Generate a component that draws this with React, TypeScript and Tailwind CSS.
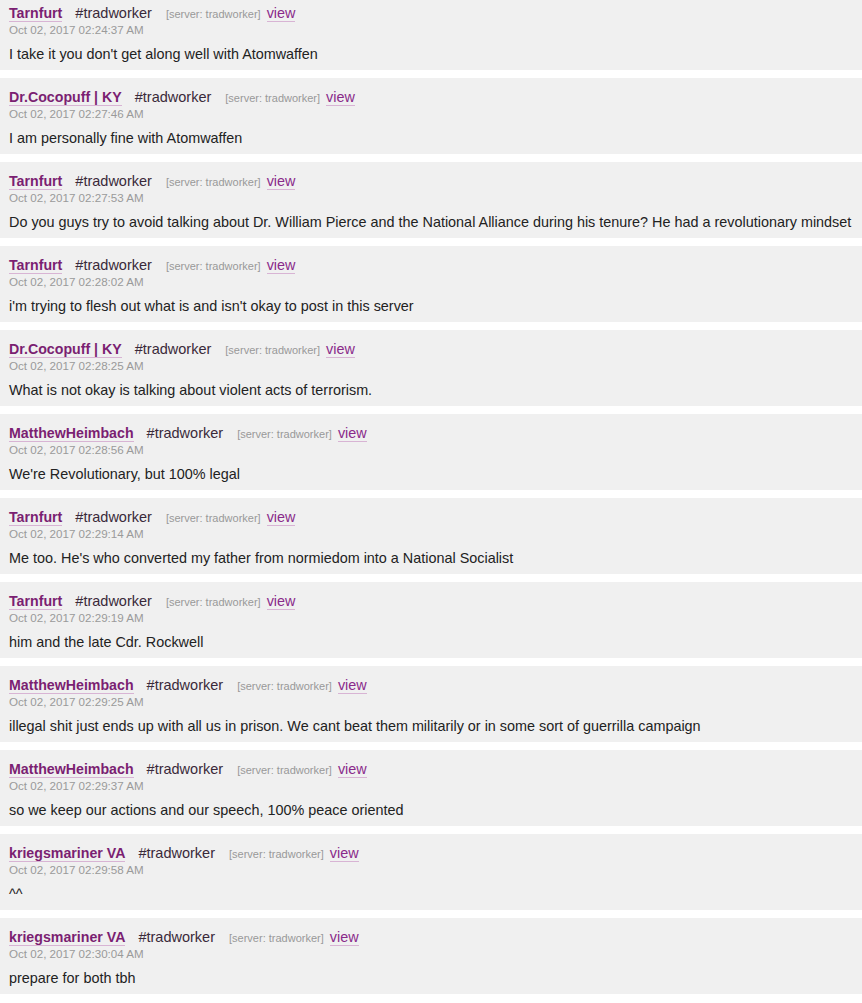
const MESSAGES = [
  { user: "Tarnfurt", time: "Oct 02, 2017 02:24:37 AM", text: "I take it you don't get along well with Atomwaffen" },
  { user: "Dr.Cocopuff | KY", time: "Oct 02, 2017 02:27:46 AM", text: "I am personally fine with Atomwaffen" },
  { user: "Tarnfurt", time: "Oct 02, 2017 02:27:53 AM", text: "Do you guys try to avoid talking about Dr. William Pierce and the National Alliance during his tenure? He had a revolutionary mindset" },
  { user: "Tarnfurt", time: "Oct 02, 2017 02:28:02 AM", text: "i'm trying to flesh out what is and isn't okay to post in this server" },
  { user: "Dr.Cocopuff | KY", time: "Oct 02, 2017 02:28:25 AM", text: "What is not okay is talking about violent acts of terrorism." },
  { user: "MatthewHeimbach", time: "Oct 02, 2017 02:28:56 AM", text: "We're Revolutionary, but 100% legal" },
  { user: "Tarnfurt", time: "Oct 02, 2017 02:29:14 AM", text: "Me too. He's who converted my father from normiedom into a National Socialist" },
  { user: "Tarnfurt", time: "Oct 02, 2017 02:29:19 AM", text: "him and the late Cdr. Rockwell" },
  { user: "MatthewHeimbach", time: "Oct 02, 2017 02:29:25 AM", text: "illegal shit just ends up with all us in prison. We cant beat them militarily or in some sort of guerrilla campaign" },
  { user: "MatthewHeimbach", time: "Oct 02, 2017 02:29:37 AM", text: "so we keep our actions and our speech, 100% peace oriented" },
  { user: "kriegsmariner VA", time: "Oct 02, 2017 02:29:58 AM", text: "^^" },
  { user: "kriegsmariner VA", time: "Oct 02, 2017 02:30:04 AM", text: "prepare for both tbh" },
];

function Message({ user, time, text }: { user: string; time: string; text: string }) {
  return (
    <div className="bg-[#f0f0f0] pl-[9px] pt-[11px] pb-[8px]">
      <div className="flex items-baseline h-[16px] leading-[16px] whitespace-nowrap">
        <a className="text-[14.2px] font-bold text-[#7b1f72] border-b border-[#d8b4d4]">{user}</a>
        <span className="ml-[13px] text-[14.5px] text-[#3a2a3a]">#tradworker</span>
        <span className="ml-[14px] text-[11px] text-[#999999]">[server: tradworker]</span>
        <a className="ml-[6px] text-[14.4px] text-[#8a2a8a] border-b border-[#d8b4d4]">view</a>
      </div>
      <div className="h-[16px] leading-[17px] text-[11.6px] text-[#9a9a9a]">{time}</div>
      <div className="mt-[9px] h-[16px] leading-[16px] text-[14.4px] text-[#222222] whitespace-nowrap">{text}</div>
    </div>
  );
}

export default function App() {
  return (
    <div
      className="w-[862px] h-[1003px] overflow-hidden bg-white"
      style={{ fontFamily: '"Liberation Sans", Arial, sans-serif' }}
    >
      <div className="-mt-[6px] flex flex-col gap-[8px]">
        {MESSAGES.map((m, i) => (
          <Message key={i} {...m} />
        ))}
      </div>
    </div>
  );
}
